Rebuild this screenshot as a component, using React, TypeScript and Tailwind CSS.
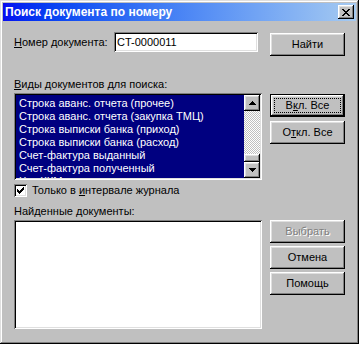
import React from "react";

const raised =
  "shadow-[inset_-1px_-1px_#000,inset_1px_1px_#fff,inset_-2px_-2px_#808080,inset_2px_2px_#dfdfdf]";
const defRaised =
  "shadow-[inset_0_0_0_1px_#000,inset_-2px_-2px_#000,inset_2px_2px_#fff,inset_-3px_-3px_#808080,inset_3px_3px_#dfdfdf]";
const sunken =
  "shadow-[inset_1px_1px_#808080,inset_-1px_-1px_#fff,inset_2px_2px_#000,inset_-2px_-2px_#dfdfdf]";

function Btn({
  children,
  def,
  disabled,
  className = "",
}: {
  children: React.ReactNode;
  def?: boolean;
  disabled?: boolean;
  className?: string;
}) {
  return (
    <div
      className={`relative w-[75px] h-[23px] shrink-0 bg-[#c0c0c0] flex items-center justify-center ${
        def ? defRaised : raised
      } ${disabled ? "text-[#808080] [text-shadow:1px_1px_#fff]" : "text-black"} ${className}`}
    >
      {def && <div className="absolute inset-[4px] border border-dotted border-black" />}
      <span className="relative">{children}</span>
    </div>
  );
}

function U({ children }: { children: React.ReactNode }) {
  return <span className="underline underline-offset-[1px]">{children}</span>;
}

function Arrow({ down }: { down?: boolean }) {
  return (
    <svg width="7" height="4" viewBox="0 0 7 4" shapeRendering="crispEdges">
      <path
        fill="#000"
        d={
          down
            ? "M0 0h7v1h-7z M1 1h5v1h-5z M2 2h3v1h-3z M3 3h1v1h-1z"
            : "M3 0h1v1h-1z M2 1h3v1h-3z M1 2h5v1h-5z M0 3h7v1h-7z"
        }
      />
    </svg>
  );
}

const items = [
  "Строка аванс. отчета (прочее)",
  "Строка аванс. отчета (закупка ТМЦ)",
  "Строка выписки банка (приход)",
  "Строка выписки банка (расход)",
  "Счет-фактура выданный",
  "Счет-фактура полученный",
  "Чек ККМ",
];

export default function App() {
  return (
    <div
      className={`w-[359px] h-[344px] overflow-hidden bg-[#c0c0c0] p-[3px] font-['Liberation_Sans',Arial,sans-serif] text-[11px] leading-[13px] text-black shadow-[inset_-1px_-1px_#000,inset_1px_1px_#dfdfdf,inset_-2px_-2px_#808080,inset_2px_2px_#fff]`}
    >
      {/* Title bar */}
      <div className="h-[18px] flex items-center justify-between pl-[2px] pr-[2px] bg-linear-to-r from-[#0808f0] to-[#a6caf0]">
        <span className="text-white font-bold text-[12px] leading-[14px]">
          Поиск документа по номеру
        </span>
        <div className={`w-[16px] h-[14px] bg-[#c0c0c0] flex items-center justify-center ${raised}`}>
          <svg width="8" height="7" viewBox="0 0 8 7" shapeRendering="crispEdges">
            <path
              fill="#000"
              d="M0 0h2v1h-2z M6 0h2v1h-2z M1 1h2v1h-2z M5 1h2v1h-2z M2 2h4v1h-4z M3 3h2v1h-2z M2 4h4v1h-4z M1 5h2v1h-2z M5 5h2v1h-2z M0 6h2v1h-2z M6 6h2v1h-2z"
            />
          </svg>
        </div>
      </div>

      <div className="px-[11px]">
        {/* Row 1 */}
        <div className="mt-[11px] flex items-start">
          <div className="w-[248px] h-[20px] flex items-center">
            <span className="w-[100px]">
              <U>Н</U>омер документа:
            </span>
            <div className={`w-[144px] h-[20px] bg-white flex items-center pl-[3px] ${sunken}`}>
              CT-0000011
            </div>
          </div>
          <Btn className="ml-[8px] mt-[1px]">Найти</Btn>
        </div>

        {/* Section 2 */}
        <div className="mt-[22px] flex items-start">
          <div className="w-[248px]">
            <div>
              <U>В</U>иды документов для поиска:
            </div>
            <div className={`mt-[2px] h-[87px] bg-white p-[2px] ${sunken}`}>
              <div className="h-full flex">
                <div className="flex-1 bg-[#000080] text-white pt-[2px] overflow-hidden">
                  {items.map((t) => (
                    <div key={t} className="h-[13px] pl-[3px] whitespace-nowrap">
                      {t}
                    </div>
                  ))}
                </div>
                <div className="w-[16px] flex flex-col">
                  <div className={`h-[16px] bg-[#c0c0c0] flex items-center justify-center ${raised}`}>
                    <Arrow />
                  </div>
                  <div className="flex-1 bg-[image:repeating-conic-gradient(#c0c0c0_0%_25%,#fff_0%_50%)] bg-[length:2px_2px]" />
                  <div className={`h-[8px] bg-[#c0c0c0] ${raised}`} />
                  <div className={`h-[16px] bg-[#c0c0c0] flex items-center justify-center ${raised}`}>
                    <Arrow down />
                  </div>
                </div>
              </div>
            </div>
            <div className="mt-[4px] h-[13px] flex items-center">
              <div className={`w-[13px] h-[13px] bg-white flex items-center justify-center ${sunken}`}>
                <svg width="7" height="7" viewBox="0 0 7 7" shapeRendering="crispEdges">
                  <path
                    fill="#000"
                    d="M6 0h1v1h-1z M5 1h2v1h-2z M0 2h1v1h-1z M4 2h3v1h-3z M0 3h2v1h-2z M3 3h3v1h-3z M0 4h5v1h-5z M1 5h3v1h-3z M2 6h1v1h-1z"
                  />
                </svg>
              </div>
              <span className="ml-[5px]">
                Только в <U>и</U>нтервале журнала
              </span>
            </div>
          </div>
          <div className="ml-[8px] mt-[16px] flex flex-col gap-[4px]">
            <Btn def>
              В<U>к</U>л. Все
            </Btn>
            <Btn>
              О<U>т</U>кл. Все
            </Btn>
          </div>
        </div>

        {/* Section 3 */}
        <div className="mt-[8px] flex items-start">
          <div className="w-[248px]">
            <div>
              Найденные <U>д</U>окументы:
            </div>
            <div className={`mt-[2px] h-[109px] bg-white ${sunken}`} />
          </div>
          <div className="ml-[8px] mt-[15px] flex flex-col gap-[3px]">
            <Btn disabled>Выбрать</Btn>
            <Btn>Отмена</Btn>
            <Btn>Помощь</Btn>
          </div>
        </div>
      </div>
    </div>
  );
}
